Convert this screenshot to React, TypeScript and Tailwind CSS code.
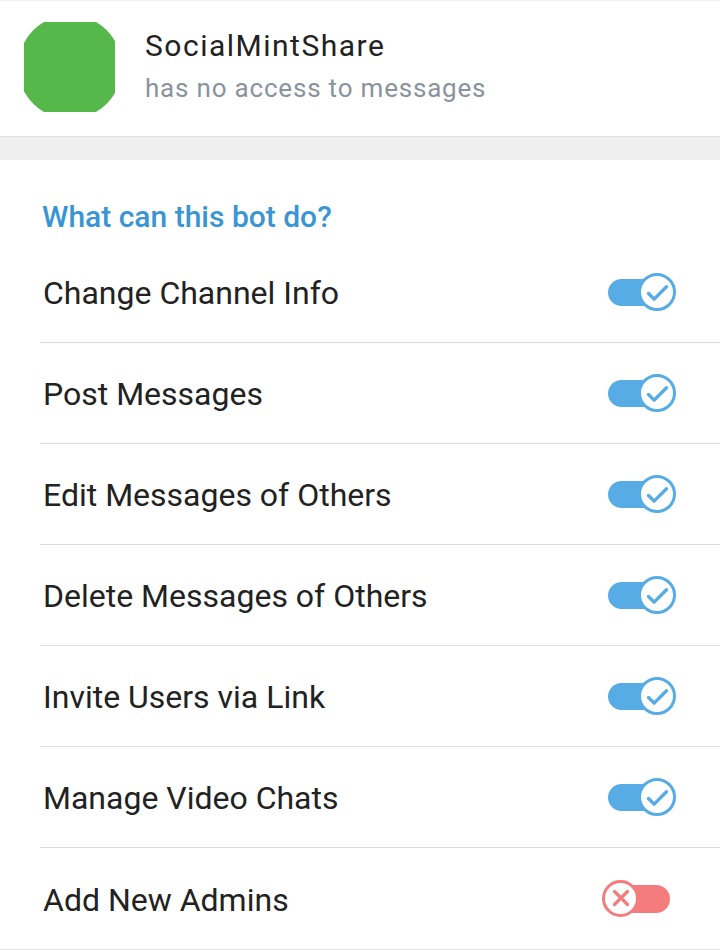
import { Check, X } from "lucide-react";

const rights = [
  { label: "Change Channel Info", on: true },
  { label: "Post Messages", on: true },
  { label: "Edit Messages of Others", on: true },
  { label: "Delete Messages of Others", on: true },
  { label: "Invite Users via Link", on: true },
  { label: "Manage Video Chats", on: true },
  { label: "Add New Admins", on: false },
];

function Toggle({ on }: { on: boolean }) {
  if (on) {
    return (
      <div className="relative h-[38px] w-[70px]">
        <div className="absolute left-[2px] top-[6px] h-[27px] w-[50px] rounded-full bg-[#58ace6]" />
        <div className="absolute right-0 top-0 flex size-[38px] items-center justify-center rounded-full border-[3px] border-[#58ace6] bg-white text-[#58ace6]">
          <Check className="mt-[2px] size-[27px]" strokeWidth={3} />
        </div>
      </div>
    );
  }
  return (
    <div className="relative h-[38px] w-[70px]">
      <div className="absolute right-[6px] top-[5px] h-[28px] w-[50px] rounded-full bg-[#f47c7c]" />
      <div className="absolute left-[-4px] top-0 flex size-[37px] items-center justify-center rounded-full border-[3px] border-[#f47c7c] bg-white text-[#f47c7c]">
        <X className="size-[26px]" strokeWidth={3} />
      </div>
    </div>
  );
}

export default function App() {
  return (
    <div className="h-[950px] w-[720px] overflow-hidden bg-[#efefef] font-['Roboto',sans-serif] text-[#222]">
      <div className="flex h-[137px] items-start border-b border-[#e2e2e2] border-t border-t-[#f2f2f2] bg-white">
        <div className="ml-[24px] mt-[21px] flex h-[90px] w-[91px] items-center justify-center overflow-hidden">
          <div className="size-[104px] shrink-0 rounded-full bg-[#56b84a]" />
        </div>
        <div className="ml-[30px] mt-[26px] flex flex-col">
          <span className="text-[30px] leading-[38px] tracking-[1.5px]">SocialMintShare</span>
          <span className="mt-[6px] text-[26px] leading-[34px] tracking-[0.8px] text-[#8a939c]">
            has no access to messages
          </span>
        </div>
      </div>

      <div className="mt-[23px] border-b border-[#e2e2e2] bg-white">
        <div className="h-[82px] px-[42px] pt-[39px] text-[30px] font-medium leading-[36px] text-[#3a95d4]">
          What can this bot do?
        </div>
        <div className="flex flex-col">
          {rights.map((r, i) => (
            <div
              key={r.label}
              className={`ml-[40px] flex h-[101px] items-center justify-between pr-[44px] ${
                i < rights.length - 1 ? "border-b border-[#dcdcdc]" : ""
              }`}
            >
              <span className="ml-[3px] mt-[2px] text-[32px] leading-[38px]">{r.label}</span>
              <Toggle on={r.on} />
            </div>
          ))}
        </div>
      </div>
    </div>
  );
}
